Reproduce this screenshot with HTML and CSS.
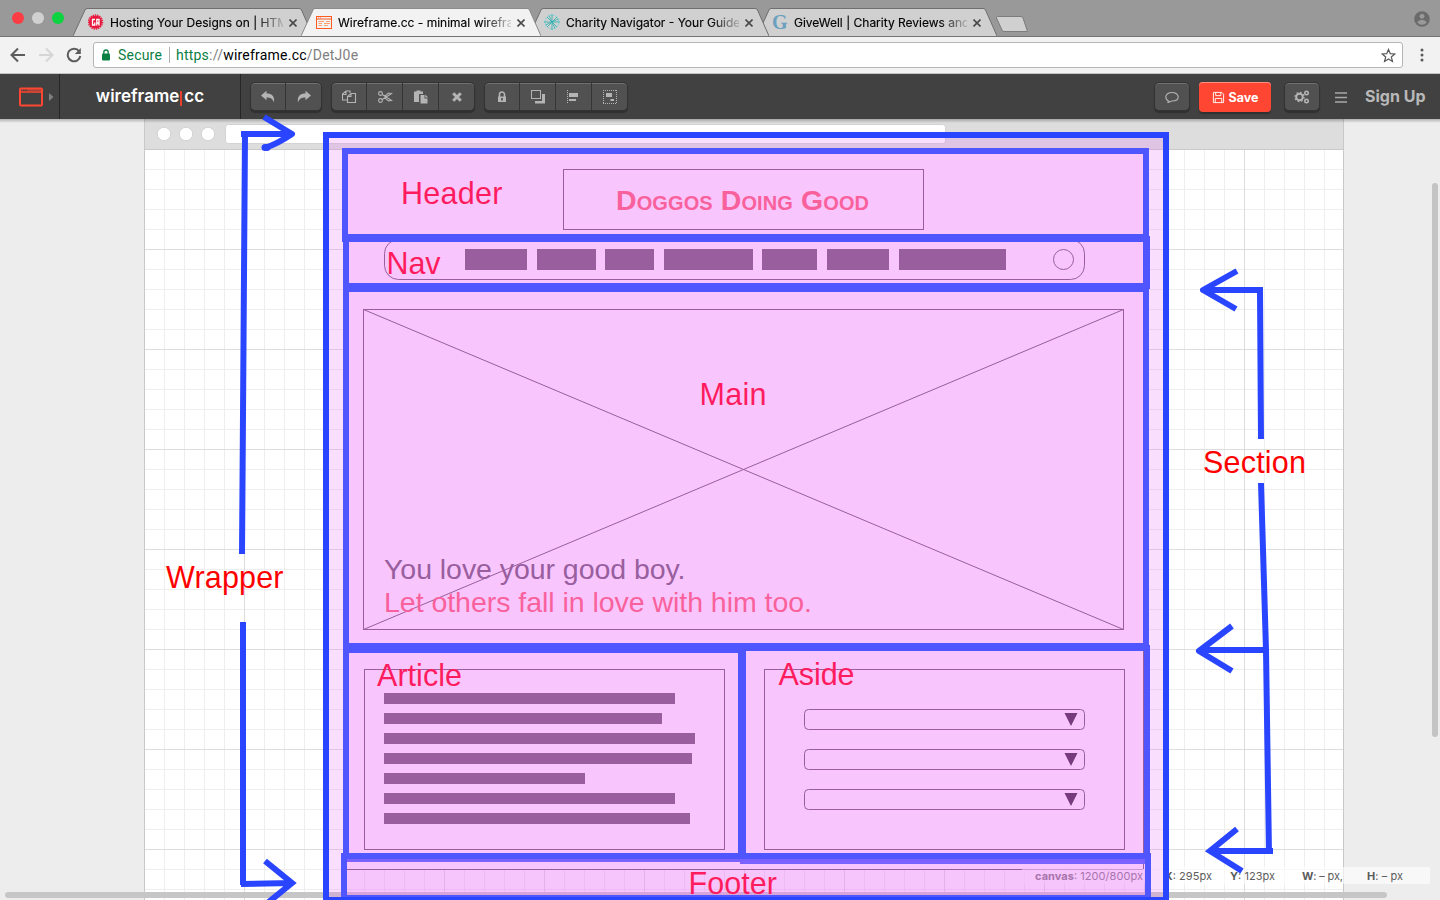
FILE: index.html
```html
<!DOCTYPE html>
<html lang="en">
<head>
<meta charset="utf-8">
<title>Wireframe.cc - minimal wireframing tool</title>
<link rel="stylesheet" href="styles.css">
</head>
<body>
<div class="tabstrip">
  <div class="lights"><i class="red"></i><i class="grey"></i><i class="green"></i></div>
  <div class="tab">
    <svg class="tab-shape" viewBox="0 0 240 29"><path d="M0 28 12 2Q12.500 .5 14 .5H226Q228 .5 228.500 2L240 28"/></svg>
    <svg class="fav" viewBox="0 0 16 16"><circle cx="7.500" cy="8" r="6.600" fill="#e8173d"/><circle cx="7.500" cy="8" r="7" fill="none" stroke="#e8173d" stroke-width="1.500" stroke-dasharray="1.300 1"/><path d="M7 5.500H4.500V11H6.800V8.500M8.800 11.500V5.500H11V11.500M8.500 9H11" fill="none" stroke="#fff" stroke-width="1.300"/></svg>
    <span class="title">Hosting Your Designs on | HTM</span>
    <svg class="close" viewBox="0 0 8 8"><path d="M.5.5l7 7m0-7l-7 7"/></svg>
  </div>
  <div class="tab active">
    <svg class="tab-shape" viewBox="0 0 240 29"><path d="M0 28 12 2Q12.500 .5 14 .5H226Q228 .5 228.500 2L240 28"/></svg>
    <svg class="fav" viewBox="0 0 16 16" fill="none" stroke="#ff5a1f"><rect x=".5" y="2.500" width="15" height="12"/><path d="M0 5H16"/><path d="M2 3.800H3M4 3.800H5" stroke-width=".7"/><path d="M2.500 7.500H8M10 7.500H14M2.500 9.500H6M8 9.500H14M2.500 11.500H6M8 11.500H12" stroke="#ffa06c"/></svg>
    <span class="title">Wireframe.cc - minimal wirefra</span>
    <svg class="close" viewBox="0 0 8 8"><path d="M.5.5l7 7m0-7l-7 7"/></svg>
  </div>
  <div class="tab third">
    <svg class="tab-shape" viewBox="0 0 240 29"><path d="M0 28 12 2Q12.500 .5 14 .5H226Q228 .5 228.500 2L240 28"/></svg>
    <svg class="fav" viewBox="0 0 16 16" fill="none" stroke="#2eb0b0"><circle cx="8" cy="8" r="7" stroke="#8fd0d8"/><path d="M8 0V16M0 8H16M3 3 13 13M13 3 3 13M5 1.500 11 14.500M1.500 11 14.500 5" stroke-width=".8"/></svg>
    <span class="title">Charity Navigator - Your Guide</span>
    <svg class="close" viewBox="0 0 8 8"><path d="M.5.5l7 7m0-7l-7 7"/></svg>
  </div>
  <div class="tab">
    <svg class="tab-shape" viewBox="0 0 240 29"><path d="M0 28 12 2Q12.500 .5 14 .5H226Q228 .5 228.500 2L240 28"/></svg>
    <span class="fav g-mark">G</span>
    <span class="title">GiveWell | Charity Reviews and</span>
    <svg class="close" viewBox="0 0 8 8"><path d="M.5.5l7 7m0-7l-7 7"/></svg>
  </div>
  <svg class="newtab" viewBox="0 0 34 17"><path d="M2.500 .5H26Q27.500 .5 28 2L32.500 15.500H9Q7.500 15.500 7 14L1.500 2Q1 .5 2.500 .5Z"/></svg>
  <svg class="profile" viewBox="0 0 16 16"><circle cx="8" cy="8" r="7.800" fill="#6b6b6b"/><circle cx="8" cy="5.300" r="2.400" fill="#999"/><path d="M3.200 11.300Q5 8.700 8 8.700T12.800 11.300Q11 13.800 8 13.800T3.200 11.300Z" fill="#999"/></svg>
</div>

<div class="navbar">
  <svg class="nav-icon" viewBox="0 0 16 16"><path d="M15 8H2M8 1.500 1.500 8 8 14.500"/></svg>
  <svg class="nav-icon off" viewBox="0 0 16 16"><path d="M1 8H14M8 1.500 14.500 8 8 14.500"/></svg>
  <svg class="nav-icon" viewBox="0 0 16 16"><path d="M13.200 4.300A6.300 6.300 0 1 0 14.300 9"/><path d="M14.800 1V7H8.800Z" fill="#5c5c5c" stroke="none"/></svg>
  <div class="omnibox">
    <svg class="padlock" viewBox="0 0 10 12"><rect x="1" y="4.500" width="8" height="7" rx="1" fill="#0b8043"/><path d="M2.800 5V3.200a2.200 2.200 0 0 1 4.400 0V5" fill="none" stroke="#0b8043" stroke-width="1.300"/></svg>
    <span class="secure">Secure</span><i class="divider"></i>
    <span class="url"><b>https</b>://<em>wireframe.cc</em>/DetJ0e</span>
    <svg class="star" viewBox="0 0 16 16"><path d="M8 1.500 9.900 6.100 14.700 6.400 11 9.600 12.200 14.300 8 11.700 3.800 14.300 5 9.600 1.300 6.400 6.100 6.100Z"/></svg>
  </div>
  <svg class="dots" viewBox="0 0 4 14"><circle cx="2" cy="2" r="1.500"/><circle cx="2" cy="7" r="1.500"/><circle cx="2" cy="12" r="1.500"/></svg>
</div>

<header class="toolbar">
  <div class="device">
    <svg width="26" height="20" viewBox="0 0 26 20"><rect x="2" y="1.500" width="22" height="17" rx="1" fill="none" stroke="#ff4632" stroke-width="2"/><path d="M2 5H24" stroke="#ff4632" stroke-width="1.500"/><path d="M4 3H5M6.500 3H7.500M9 3H24" stroke="#ff4632"/></svg>
    <svg width="5" height="8" viewBox="0 0 5 8"><path d="M0 0 4.500 4 0 8Z" fill="#808080"/></svg>
  </div>
  <div class="brand">wireframe<i></i>cc</div>
  <div class="group">
    <span><svg viewBox="0 0 16 16"><path d="M1 6.500 6.500 1.800V4.600C11.500 4.600 15 7 14 13.500 12.800 9.800 10.500 8.500 6.500 8.500V11.300Z"/></svg></span>
    <span><svg viewBox="0 0 16 16"><path d="M15 6.500 9.500 1.800V4.600C4.500 4.600 1 7 2 13.500 3.200 9.800 5.500 8.500 9.500 8.500V11.300Z"/></svg></span>
  </div>
  <div class="group">
    <span><svg class="line" viewBox="0 0 16 16"><path d="M6 11H1.500V5L5 2H9V4M5 2V5.500H1.500M6.500 7.500 10 4.500H14.500V13.500H6.500ZM10 4.500V7.500H6.500"/></svg></span>
    <span><svg class="line" viewBox="0 0 16 16"><circle cx="3.500" cy="4.500" r="1.900"/><circle cx="3.500" cy="11.500" r="1.900"/><path d="M5.200 5.500 14.500 11.500 11.500 12 7.500 8.700M5.200 10.500 14.500 4.500 11.500 4 7.500 7.300"/></svg></span>
    <span><svg viewBox="0 0 16 16"><path d="M1 2.500H3.500V1.500H7.500V2.500H10V5H6V13H1Z"/><path d="M7.500 6H11.500V9.500H14.500V14.500H7.500Z"/><path d="M12.300 5.500 15 8.500H12.300Z"/></svg></span>
    <span><svg viewBox="0 0 16 16"><path d="M4.200 4.200 11.800 11.800M11.800 4.200 4.200 11.800" stroke="#b4b4b4" stroke-width="3"/></svg></span>
  </div>
  <div class="group">
    <span><svg viewBox="0 0 16 16"><path d="M4 7.500H12V13H4Z"/><path d="M5.500 8V5.500a2.500 2.500 0 0 1 5 0V8" fill="none" stroke="#b4b4b4" stroke-width="1.600"/><path d="M8 9V11.500" stroke="#444" stroke-width="1.500"/></svg></span>
    <span><svg viewBox="0 0 16 16"><path d="M12 5H15V14.500H5V12H12Z"/><rect x="1.500" y="1.500" width="9" height="8" fill="none" stroke="#b4b4b4"/></svg></span>
    <span><svg viewBox="0 0 16 16"><path d="M1.500 1V15" stroke="#b4b4b4" stroke-dasharray="1 1"/><path d="M3 4H12V8H3ZM3 10H10V12H3Z"/></svg></span>
    <span><svg viewBox="0 0 16 16"><path d="M1 1.500H15M1 14.500H15M1.500 1V15M14.500 1V15" fill="none" stroke="#b4b4b4" stroke-dasharray="1 1"/><path d="M4 4H10V8H4ZM8.500 10H12V12H8.500Z"/></svg></span>
  </div>
  <div class="actions">
    <div class="group"><span><svg class="line" viewBox="0 0 16 16"><path d="M4.500 12C2.500 11 1.800 9.500 1.800 8 1.800 5.500 4.500 3.500 8 3.500S14.200 5.500 14.200 8 11.500 12 8 12C7 12 6 13 3.500 13.500 4.200 13 4.500 12.500 4.500 12Z"/></svg></span></div>
    <div class="save"><svg viewBox="0 0 14 14"><path d="M1.500 1.500H10.500L12.500 3.500V12.500H1.500ZM4 1.500V5H9.500V1.500M3.500 12.500V8H10.500V12.500"/></svg>Save</div>
    <div class="group"><span><svg class="line" viewBox="0 0 16 16"><circle cx="5.500" cy="8" r="3.300" stroke-width="2"/><circle cx="5.500" cy="8" r="4.600" stroke-dasharray="1.800 1.800"/><circle cx="12.500" cy="4" r="1.700" stroke-width="1.600"/><circle cx="12.500" cy="12" r="1.700" stroke-width="1.600"/></svg></span></div>
    <svg class="burger" viewBox="0 0 12 11"><path d="M0 1H12M0 5.500H12M0 10H12"/></svg>
    <span class="signup">Sign Up</span>
  </div>
</header>

<main class="workspace">
<svg class="board" viewBox="0 119 1440 781">
  <defs>
    <pattern id="minor" x="144" y="149" width="20" height="20" patternUnits="userSpaceOnUse"><path d="M.5 0V20M0 .5H20" stroke="#eee"/></pattern>
    <pattern id="major" x="144" y="149" width="100" height="100" patternUnits="userSpaceOnUse"><path d="M.5 0V100M0 .5H100" stroke="#ddd"/></pattern>
    <linearGradient id="shade" x2="0" y2="1"><stop offset="0" stop-color="#000" stop-opacity=".25"/><stop offset="1" stop-color="#000" stop-opacity="0"/></linearGradient>
  </defs>
  <!-- canvas and its browser frame -->
  <rect x="144" y="149" width="1200" height="760" fill="#fff"/>
  <rect x="144" y="149" width="1200" height="760" fill="url(#minor)"/>
  <rect x="144" y="149" width="1200" height="760" fill="url(#major)"/>
  <rect x="144" y="119" width="1200" height="30" fill="#ddd"/>
  <path d="M144 149.500H1344M144.500 119V900M1343.500 119V900" stroke="#c9c9c9"/>
  <g fill="#fff" stroke="#ccc" stroke-width=".8"><circle cx="164" cy="134" r="6.700"/><circle cx="186" cy="134" r="6.700"/><circle cx="208" cy="134" r="6.700"/><rect x="225.500" y="124.500" width="720" height="19" rx="3"/></g>
  <rect y="119" width="1440" height="4" fill="url(#shade)"/>
  <!-- status line -->
  <rect x="1022" y="867" width="408" height="17" fill="#fff" opacity=".6"/>
  <g class="status">
    <text x="1164.500" y="880" textLength="47.500"><tspan class="k">X</tspan>: 295px</text>
    <text x="1230" y="880" textLength="45"><tspan class="k">Y</tspan>: 123px</text>
    <text x="1302" y="880" textLength="41"><tspan class="k">W</tspan>: – px,</text>
    <text x="1367" y="880" textLength="36"><tspan class="k">H</tspan>: – px</text>
  </g>
  <rect x="5" y="892" width="1382" height="6" rx="3" fill="#c6c6c6"/>
  <rect x="1432" y="183" width="6" height="554" rx="3" fill="#c4c4c4"/>

  <!-- wrapper and page tints -->
  <rect x="326" y="135" width="840" height="765" fill="#eb7bf7" fill-opacity=".25"/>
  <rect x="345" y="151" width="803" height="718" fill="#f8c6fd"/>
  <rect x="344" y="869" width="804" height="28" fill="#eb7bf7" fill-opacity=".25"/>
  <text class="status tinted" x="1035" y="880" textLength="108"><tspan class="k">canvas</tspan>: 1200/800px</text>

  <!-- wireframe widgets -->
  <g class="outline">
    <path d="M347 869.500H1022M1143.500 650V869"/><path d="M1022 869.500H1143" opacity=".4"/>
    <rect x="563.500" y="169.500" width="360" height="60"/>
    <rect x="384.500" y="239.500" width="700" height="40" rx="14"/><circle cx="1063.500" cy="259.500" r="10"/>
    <rect x="363.500" y="309.500" width="760" height="320"/><path d="M363.500 309.500 1123.500 629.500M1123.500 309.500 363.500 629.500"/>
    <rect x="364.500" y="669.500" width="360" height="180"/><rect x="764.500" y="669.500" width="360" height="180"/>
    <rect x="804.500" y="709.500" width="280" height="20" rx="4"/><rect x="804.500" y="749.500" width="280" height="20" rx="4"/><rect x="804.500" y="789.500" width="280" height="20" rx="4"/>
  </g>
  <path fill="#995e9e" d="M465 249h62v21h-62zM537 249h59v21h-59zM605 249h49v21h-49zM664 249h89v21h-89zM762 249h55v21h-55zM827 249h62v21h-62zM899 249h107v21h-107zM384 693h291v11h-291zM384 713h278v11h-278zM384 733h311v11h-311zM384 753h308v11h-308zM384 773h201v11h-201zM384 793h291v11h-291zM384 813h306v11h-306z"/>
  <path fill="#773a7c" d="M1064.500 713h13l-6.500 13zM1064.500 753h13l-6.500 13zM1064.500 793h13l-6.500 13z"/>
  <text class="logo" x="616" y="210" textLength="253">Doggos Doing Good</text>
  <text class="tagline" x="384" y="579" textLength="301.500">You love your good boy.</text>
  <text class="tagline pink" x="384" y="612" textLength="428">Let others fall in love with him too.</text>

  <!-- section frames -->
  <g fill="#4f56ff">
    <path d="M342 148H1149V154H342zM342 148H348V240H342zM1143 148H1149V236H1143zM342 234H1149V242H342z"/>
    <path d="M343 240H349V853H343zM1143 236H1150V289H1143zM343 283H1149V292H343zM1143 289H1149V645H1143z"/>
    <path d="M343 643H746V653H343zM738 643H1149V651H738zM738 643H746V853H738zM1144 645H1150V853H1144z"/>
    <path fill="#7b62ff" d="M347 859H740V862H347zM740 859H1145V864H740z"/>
    <path d="M341 853H1151V859H341zM341 853H347V897H341zM1145 853H1151V897H1145zM341 895H1151V897H341z"/>
  </g>
  <rect class="pen" x="326" y="135" width="840" height="765"/>

  <!-- arrows -->
  <g class="pen">
    <path d="M242 554 245 134M241 134H292"/>
    <path d="M264 117 292 134Q277 144 266 147.500" stroke-linejoin="round"/>
    <path d="M243 622V885M241 884 292 883M265 861 292 883 265 905"/>
    <path d="M1261 439 1260 290H1203"/>
    <path d="M1237 271 1203 290 1236 309M1232 626 1199 651 1232 671" stroke-linejoin="round"/>
    <path d="M1261 483 1266 650 1269 854M1267 650H1200M1273 851H1210M1237 829 1210 851 1242 871"/>
  </g>
  <path d="M265 147.500h2" stroke="#2a45ff" stroke-width="7" stroke-linecap="round"/>

  <g class="label">
    <text x="401" y="204" textLength="101.500">Header</text>
    <text x="386.500" y="274" textLength="54">Nav</text>
    <text x="699.500" y="405" textLength="67">Main</text>
    <text x="377" y="686" textLength="85">Article</text>
    <text x="778.500" y="685" textLength="76">Aside</text>
    <text x="688.500" y="894" textLength="88.500">Footer</text>
    <text class="bare" x="1203" y="473" textLength="103">Section</text>
    <text class="bare" x="166" y="588" textLength="117.500">Wrapper</text>
  </g>
</svg>
</main>
</body>
</html>
```
FILE: styles.css
```css
* { box-sizing: border-box; }
body { margin: 0; height: 900px; overflow: hidden; display: flex; flex-direction: column; background: #ededed; font-family: Inter, "Liberation Sans", sans-serif; }
svg { display: block; flex: none; }

.tabstrip { height: 37px; flex: none; display: flex; align-items: flex-end; background: #999; border-bottom: 1px solid #737373; }
.lights { width: 73px; height: 37px; display: flex; gap: 8px; padding: 13px 0 0 12px; }
.lights i { width: 12px; height: 12px; border-radius: 50%; }
.red { background: #fc3d43; }
.grey { background: #d0d0d0; }
.green { background: #0cd33f; }
.tab { position: relative; width: 240px; height: 28px; margin-right: -12px; flex: none; display: flex; align-items: center; padding-left: 15px; }
.tab-shape { position: absolute; left: 0; top: 0; width: 240px; height: 29px; fill: #d0d0d0; stroke: #6f6f6f; }
.third { z-index: 1; }
.active { z-index: 2; }
.active .tab-shape { fill: #f2f2f2; stroke: #8a8a8a; }
.fav { position: relative; width: 16px; height: 16px; flex: none; }
.g-mark { font: bold 20px/16px "Liberation Serif", serif; color: #6aa0bf; }
.title { position: relative; top: 1px; width: 173px; margin-left: 6px; white-space: nowrap; font-size: 12px; line-height: 18px; letter-spacing: 0; color: #000; -webkit-text-stroke: .15px #000; -webkit-mask-image: linear-gradient(90deg, #000 145px, transparent 178px); mask-image: linear-gradient(90deg, #000 145px, transparent 178px); }
.close { position: relative; top: 1px; width: 8px; height: 8px; margin-left: 6px; fill: none; stroke: #4a4a4a; stroke-width: 1.600; }
.newtab { width: 34px; height: 17px; margin: 0 0 3px 10px; fill: #d0d0d0; stroke: #7c7c7c; }
.profile { width: 16px; height: 16px; margin: 0 10px 9px auto; }

.navbar { height: 37px; flex: none; display: flex; align-items: center; padding: 0 15px 0 10px; background: #f2f2f2; border-bottom: 1px solid #c4c4c4; }
.nav-icon { width: 16px; height: 16px; margin-right: 12px; fill: none; stroke: #5c5c5c; stroke-width: 2; }
.nav-icon.off { stroke: #d6d6d6; }
.nav-icon:nth-child(3) { margin-right: 11px; }
.omnibox { width: 1310px; height: 26px; flex: none; display: flex; align-items: center; padding: 0 6px 0 7px; background: #fff; border: 1px solid #b5b5b5; border-radius: 3px; font: 14px/24px Roboto, sans-serif; color: #808080; }
.padlock { width: 10px; height: 12px; margin-right: 7px; }
.secure { width: 45px; letter-spacing: .2px; color: #0b8043; }
.divider { width: 1px; height: 16px; margin: 0 6px; background: #b0b0b0; }
.url { letter-spacing: .22px; }
.url b { font-weight: 400; color: #0b8043; }
.url em { font-style: normal; color: #000; }
.star { width: 15px; height: 15px; margin-left: auto; fill: none; stroke: #5a5a5a; stroke-width: 1.300; }
.dots { width: 4px; height: 14px; margin-left: 17px; fill: #5a5a5a; }

.toolbar { height: 45px; flex: none; display: flex; background: #414141; color: #fff; }
.device { width: 60px; display: flex; align-items: center; gap: 5px; padding-left: 18px; border-right: 1px solid #262626; }
.brand { width: 181px; margin-right: 9px; display: flex; align-items: center; justify-content: center; border-right: 1px solid #262626; font: 600 17px/45px Inter, sans-serif; letter-spacing: 0; }
.brand i { width: 2px; height: 15px; margin: 3px 2px 0 1px; background: #e8402e; }
.group { height: 29px; margin: 8px 9px 0 0; display: flex; border: 1px solid #333; border-radius: 5px; background: #515151; box-shadow: 0 2px 1px #303030, inset 0 1px #717171; }
.group span { width: 36px; display: flex; align-items: center; justify-content: center; border-right: 1px solid #353535; }
.group span:first-child { width: 35px; }
.group span:last-child { border-right: 0; width: 35px; }
.group span:only-child { width: 34px; }
.group svg { width: 16px; height: 16px; fill: #b4b4b4; }
.group svg.line { fill: none; stroke: #b4b4b4; stroke-width: 1.100; }
.actions { margin-left: auto; padding-right: 13px; display: flex; }
.save { width: 72px; height: 30px; margin: 8px 13px 0 0; display: flex; align-items: center; justify-content: center; gap: 4px; background: #ff4632; border-radius: 4px; box-shadow: 0 2px 1px #303030, inset 0 1px #ff8f80; font-size: 12.500px; font-weight: 700; }
.save svg { width: 13px; height: 13px; fill: none; stroke: #fff; }
.burger { width: 12px; height: 11px; margin: 18px 18px 0 6px; stroke: #a8a8a8; stroke-width: 1.600; }
.signup { width: 62px; white-space: nowrap; font-size: 16px; font-weight: 700; letter-spacing: 0; line-height: 45px; color: #b9b9b9; }

.workspace { flex: 1; min-height: 0; }
.board { position: relative; width: 1440px; height: 781px; overflow: visible; }
.status { font: 400 11px Inter, sans-serif; fill: #5c5c5c; }
.status .k { font-weight: 700; }
.tinted { fill: #a874ad; }
.outline { fill: none; stroke: #995e9e; }
.logo { font: small-caps bold 28.500px "Liberation Sans", sans-serif; fill: #f9619c; }
.tagline { font: 28.500px "Liberation Sans", sans-serif; fill: #995e9e; }
.pink { fill: #f9619c; }
.pen { fill: none; stroke: #2a45ff; stroke-width: 6; }
.label { font: 30.500px "Liberation Sans", sans-serif; fill: #ff1c5e; }
.bare { fill: #f00; }
```
